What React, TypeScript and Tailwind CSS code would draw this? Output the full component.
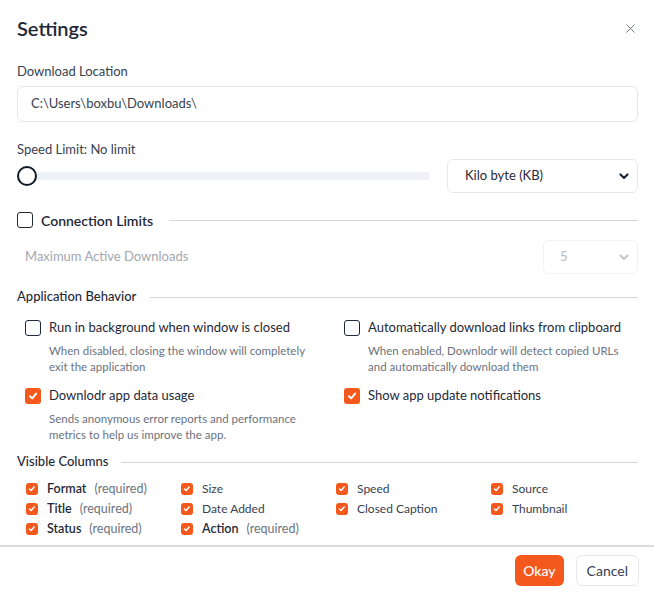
import { X } from 'lucide-react';

function Chevron({ light }: { light?: boolean }) {
  return (
    <svg width="10" height="7" viewBox="0 0 10 7" className="shrink-0">
      <polyline
        points="1.5,1.5 5,5 8.5,1.5"
        fill="none"
        stroke={light ? '#c4c8ce' : '#1f2937'}
        strokeWidth="2.2"
        strokeLinecap="round"
        strokeLinejoin="round"
      />
    </svg>
  );
}

function Box({ checked, size = 16 }: { checked?: boolean; size?: number }) {
  if (!checked) {
    return (
      <span
        className="inline-block shrink-0 rounded-[3px] border-[1.5px] border-[#1f2937] bg-white"
        style={{ width: size, height: size }}
      />
    );
  }
  return (
    <span
      className="inline-flex shrink-0 items-center justify-center rounded-[3px] bg-[#f4581c]"
      style={{ width: size, height: size }}
    >
      <svg width={size * 0.62} height={size * 0.62} viewBox="0 0 10 10">
        <polyline
          points="2,5.3 4.2,7.4 8.2,2.6"
          fill="none"
          stroke="#fff"
          strokeWidth="2"
          strokeLinecap="round"
          strokeLinejoin="round"
        />
      </svg>
    </span>
  );
}

const behaviors = [
  {
    title: 'Run in background when window is closed',
    desc: 'When disabled, closing the window will completely exit the application',
    checked: false,
  },
  {
    title: 'Automatically download links from clipboard',
    desc: 'When enabled, Downlodr will detect copied URLs and automatically download them',
    checked: false,
  },
  {
    title: 'Downlodr app data usage',
    desc: 'Sends anonymous error reports and performance metrics to help us improve the app.',
    checked: true,
  },
  {
    title: 'Show app update notifications',
    desc: '',
    checked: true,
  },
];

const columns = [
  { name: 'Format', required: true },
  { name: 'Size' },
  { name: 'Speed' },
  { name: 'Source' },
  { name: 'Title', required: true },
  { name: 'Date Added' },
  { name: 'Closed Caption' },
  { name: 'Thumbnail' },
  { name: 'Status', required: true },
  { name: 'Action', required: true },
];

export default function App() {
  return (
    <div className="w-[654px] h-[594px] bg-white font-['Lato',sans-serif] text-[#1f2937] overflow-hidden flex flex-col">
      <div className="pl-[17px] pr-4">
        {/* Header */}
        <div className="flex items-center justify-between pt-[14px]">
          <h1 className="text-[20px] leading-7 font-semibold text-[#1f2937]">Settings</h1>
          <button className="text-[#6b7280]">
            <X size={15} strokeWidth={1.5} />
          </button>
        </div>

        {/* Download location */}
        <div className="mt-[19px] text-[13px] leading-5 text-[#374151]">Download Location</div>
        <div className="mt-[5px] h-9 rounded-md border border-[#e5e7eb] flex items-center px-[13px] text-[13px] text-[#374151]">
          C:\Users\boxbu\Downloads\
        </div>

        {/* Speed limit */}
        <div className="mt-[17px] text-[13px] leading-5 text-[#374151]">Speed Limit: No limit</div>
        <div className="flex items-center gap-[17px] h-[34px]">
          <div className="relative flex-1 h-5 flex items-center">
            <div className="w-full h-2 rounded-full bg-[#eef2f6]" />
            <div className="absolute left-0 top-0 w-5 h-5 rounded-full border-2 border-[#111827] bg-white" />
          </div>
          <div className="w-[191px] h-[34px] rounded-md border border-[#e5e7eb] flex items-center justify-between pl-[17px] pr-[8px] text-[13px] text-[#1f2937]">
            <span>Kilo byte (KB)</span>
            <Chevron />
          </div>
        </div>

        {/* Connection limits */}
        <div className="mt-[17px] flex items-center h-5">
          <Box />
          <span className="ml-2 text-[14px] font-semibold text-[#1f2937]">Connection Limits</span>
          <div className="ml-4 flex-1 h-px bg-[#d1d5db]" />
        </div>
        <div className="mt-[10px] flex items-center justify-between h-[34px]">
          <span className="pl-2 text-[13px] text-[#a3a8b0]">Maximum Active Downloads</span>
          <div className="w-[95px] h-[34px] rounded-md border border-[#f1f2f4] flex items-center justify-between pl-[16px] pr-[8px] text-[13px] text-[#b5b9c0]">
            <span>5</span>
            <Chevron light />
          </div>
        </div>

        {/* Application behaviour */}
        <div className="mt-[13px] flex items-center h-5">
          <span className="text-[13px] font-medium text-[#1f2937]">Application Behavior</span>
          <div className="ml-[14px] flex-1 h-px bg-[#d1d5db]" />
        </div>
        <div className="grid grid-cols-[319px_1fr] pl-2 mt-[11px] gap-y-[11px]">
          {behaviors.map((b, i) => (
            <div key={b.title}>
              <div className="flex items-center h-5 gap-2">
                <Box checked={b.checked} />
                <span className="text-[13px] text-[#1f2937]">{b.title}</span>
              </div>
              {b.desc && (
                <p
                  className={`mt-[5px] ml-6 text-[11.5px] leading-4 text-[#6b7280] ${i % 2 === 0 ? 'pr-6' : ''}`}
                >
                  {b.desc}
                </p>
              )}
            </div>
          ))}
        </div>

        {/* Visible columns */}
        <div className="mt-[9px] flex items-center h-5">
          <span className="text-[13px] font-medium text-[#1f2937]">Visible Columns</span>
          <div className="ml-[13px] flex-1 h-px bg-[#d1d5db]" />
        </div>
        <div className="grid grid-cols-[repeat(4,155px)] pl-[9px] mt-[7px]">
          {columns.map((c) => (
            <div key={c.name} className="flex items-center h-5">
              <Box checked size={12} />
              <span
                className={`ml-[9px] ${c.required ? 'text-[12.5px] font-semibold text-[#1f2937]' : 'text-[12px] text-[#374151]'}`}
              >
                {c.name}
              </span>
              {c.required && <span className="ml-[8px] text-[12.5px] text-[#6b7280]">(required)</span>}
            </div>
          ))}
        </div>
      </div>

      {/* Footer */}
      <div className="mt-[6px] border-t-2 border-[#d9dce1] flex justify-end gap-3 pt-[8px] pr-[15px]">
        <button className="h-[31px] px-[8px] rounded-md bg-[#f4581c] text-white text-[14px] font-medium">
          Okay
        </button>
        <button className="h-[31px] px-[10px] rounded-md border border-[#e5e7eb] bg-white text-[14px] text-[#374151]">
          Cancel
        </button>
      </div>
    </div>
  );
}
